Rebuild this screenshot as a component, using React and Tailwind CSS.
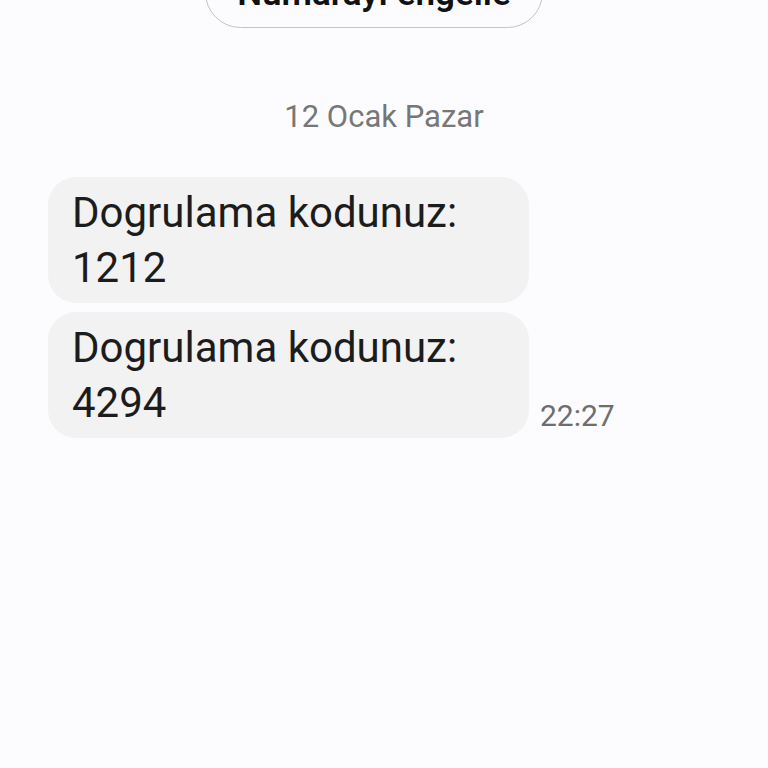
import React from 'react'

function Bubble({ code }) {
  return (
    <div className="w-[481px] rounded-[28px] bg-[#f2f2f2] px-6 py-2 text-[42px] leading-[55px] text-[#1c1c1c]">
      Dogrulama kodunuz:
      <br />
      {code}
    </div>
  )
}

export default function App() {
  return (
    <div
      className="h-[768px] w-[768px] overflow-hidden bg-[#fcfcfe]"
      style={{ fontFamily: 'Roboto, "Noto Sans", sans-serif' }}
    >
      {/* block number button, cut off at top */}
      <div className="ml-[205px] -mt-[43px] flex h-[71px] w-[338px] items-center justify-center rounded-full border-[1.5px] border-[#c4c4c6] pt-[4px] text-[35px] font-semibold text-[#111]">
        Numarayı engelle
      </div>

      <div className="mt-[69px] text-center text-[31px] leading-[40px] text-[#777]">12 Ocak Pazar</div>

      <div className="ml-[48px] mt-[40px] flex flex-col gap-[9px]">
        <Bubble code="1212" />
        <div className="flex items-end gap-[11px]">
          <Bubble code="4294" />
          <span className="pb-[4px] text-[30px] leading-[36px] text-[#6e6e6e]">22:27</span>
        </div>
      </div>
    </div>
  )
}
